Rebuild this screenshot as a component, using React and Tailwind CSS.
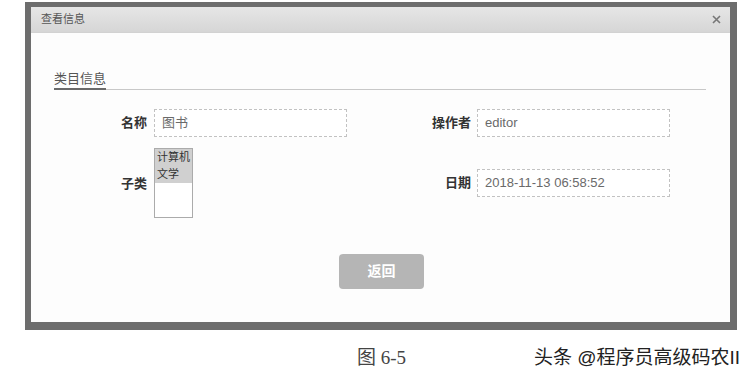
import React from 'react'

const font = { fontFamily: '"Liberation Sans", "Noto Sans CJK SC", sans-serif' }

function Field({ value, className = '' }) {
  return (
    <div className={`h-[28px] w-[193px] border border-dashed border-[#c2c2c2] bg-white flex items-center px-[7px] text-[13px] text-[#6a6a6a] ${className}`}>
      {value}
    </div>
  )
}

export default function App(){
  return (
    <div className="w-[749px] h-[379px] bg-white overflow-hidden" style={font}>
      <div className="ml-[25px] mt-[2px] w-[712px] h-[328px] border-[#6d6d6d] border-l-[6px] border-r-[7px] border-t-[5px] border-b-[8px] bg-[#fdfdfd] flex flex-col">
        <div className="h-[26px] bg-gradient-to-b from-[#e6e6e6] to-[#d6d6d6] flex items-center justify-between pl-[10px] pr-[9px] border-b border-[#d2d2d2]">
          <span className="text-[11px] text-[#555]">查看信息</span>
          <svg width="9" height="9" viewBox="0 0 9 9" className="text-[#777]">
            <path d="M1 1L8 8M8 1L1 8" stroke="currentColor" strokeWidth="1.6" />
          </svg>
        </div>

        <div className="flex flex-col pl-[23px] pr-[24px] pt-[38px]">
          <div className="text-[13px] text-[#555] leading-[16px]">类目信息</div>
          <div className="mt-[1px] h-[2px] relative">
            <div className="absolute left-0 right-0 top-[1px] h-px bg-[#c8c8c8]" />
            <div className="absolute left-0 top-0 w-[52px] h-[2px] bg-[#6a6a6a]" />
          </div>

          <div className="mt-[19px] flex items-center">
            <div className="w-[93px] text-right text-[13px] font-bold text-[#333]">名称</div>
            <Field value="图书" className="ml-[7px]" />
            <div className="w-[124px] text-right text-[13px] font-bold text-[#333]">操作者</div>
            <Field value="editor" className="ml-[6px]" />
          </div>

          <div className="mt-[11px] flex items-center">
            <div className="w-[93px] text-right text-[13px] font-bold text-[#333] pt-[2px]">子类</div>
            <div className="ml-[7px] w-[39px] h-[70px] border border-[#ababab] bg-white">
              <div className="bg-[#d0d0d0] text-[11px] leading-[17px] text-[#333] pl-[2px]">
                <div>计算机</div>
                <div>文学</div>
              </div>
            </div>
            <div className="w-[278px] text-right text-[13px] font-bold text-[#333]">日期</div>
            <Field value="2018-11-13 06:58:52" className="ml-[6px]" />
          </div>

          <div className="mt-[36px] flex justify-center pl-[3px]">
            <button className="w-[85px] h-[35px] rounded-[4px] bg-[#b5b5b5] text-white text-[14px] font-bold">返回</button>
          </div>
        </div>
      </div>

      <div className="flex items-center h-[49px] pt-[8px]">
        <div className="ml-[357px] text-[19px] text-[#444]" style={{ fontFamily: '"Liberation Serif", "Noto Sans CJK SC", serif' }}>图 6-5</div>
        <div className="ml-auto mr-[9px] text-[19px] text-[#222]">头条 @程序员高级码农II</div>
      </div>
    </div>
  )
}
